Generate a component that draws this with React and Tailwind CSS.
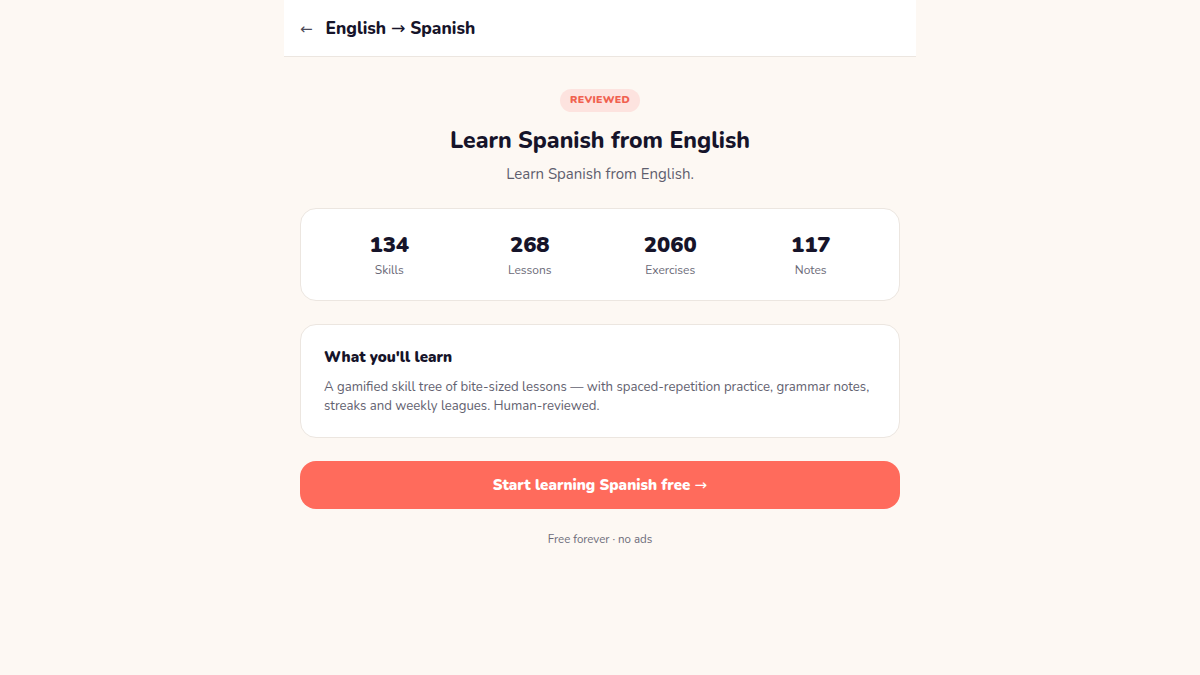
export default function App() {
  const stats = [
    { value: "134", label: "Skills" },
    { value: "268", label: "Lessons" },
    { value: "2060", label: "Exercises" },
    { value: "117", label: "Notes" },
  ];

  const arrow = "font-['DejaVu_Sans'] font-normal";

  return (
    <div
      className="min-h-screen bg-[#fdf8f3]"
      style={{ fontFamily: "Nunito, 'Open Sans', Lato, sans-serif" }}
    >
      <div className="mx-auto w-[632px]">
        <header className="h-[57px] bg-white border-b border-[#ece6e0] flex items-center px-4 gap-[13px] pt-[2px]">
          <span className={"text-[15px] text-[#4b4a58] leading-none " + arrow}>←</span>
          <h1 className="text-[17.3px] font-extrabold text-[#16142a]">
            English <span className={arrow}>→</span> Spanish
          </h1>
        </header>

        <main className="px-4 pt-[32px]">
          <div className="flex flex-col items-center">
            <span className="rounded-full bg-[#fde3df] text-[#f0614f] text-[10.5px] font-black tracking-wide px-[10px] py-[6px] leading-none">
              REVIEWED
            </span>
            <h2 className="mt-[15px] text-[23px] font-extrabold text-[#16142a] leading-tight">
              Learn Spanish from English
            </h2>
            <p className="mt-[8px] text-[15px] text-[#5f5e6e]">Learn Spanish from English.</p>
          </div>

          <div className="mt-[22px] h-[93px] rounded-2xl bg-white border border-[#ece6e0] grid grid-cols-4 items-center px-[18px]">
            {stats.map((s) => (
              <div key={s.label} className="flex flex-col items-center">
                <span className="mt-[2px] text-[22px] font-black text-[#16142a] leading-tight">{s.value}</span>
                <span className="mt-[2px] text-[12px] text-[#6b6a78]">{s.label}</span>
              </div>
            ))}
          </div>

          <div className="mt-[23px] rounded-2xl bg-white border border-[#ece6e0] px-[23px] pt-[21px] pb-[21px]">
            <h3 className="text-[15px] font-black text-[#16142a]">What you'll learn</h3>
            <p className="mt-[10px] text-[13.2px] leading-[19px] text-[#62616f]">
              A gamified skill tree of bite-sized lessons — with spaced-repetition practice, grammar notes,
              streaks and weekly leagues. Human-reviewed.
            </p>
          </div>

          <button className="mt-[23px] w-full h-[48px] rounded-2xl bg-[#ff6b5c] text-white text-[15px] font-black">
            Start learning Spanish free <span className={arrow}>→</span>
          </button>

          <p className="mt-[22px] text-center text-[11.5px] text-[#6b6a78]">Free forever · no ads</p>
        </main>
      </div>
    </div>
  );
}
